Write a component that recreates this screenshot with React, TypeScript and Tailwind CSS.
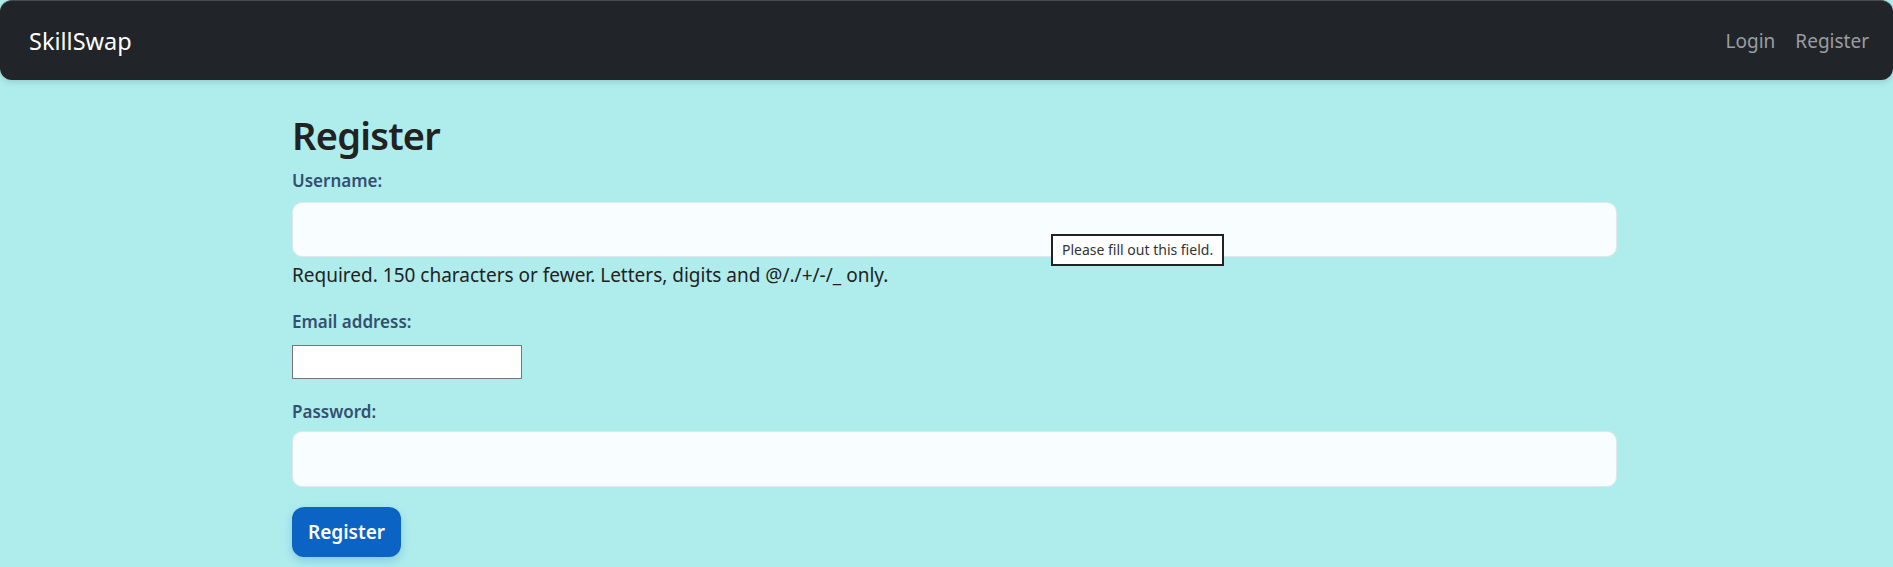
export default function App() {
  return (
    <div className="min-h-[567px] bg-[#afeded] font-['Noto_Sans',sans-serif]">
      <nav className="flex h-[80px] items-center justify-between rounded-[12px] border-t border-[#4a4d50] bg-[#212529] pl-[29px] pr-[24px] shadow-[0_2px_6px_rgba(0,0,0,0.15)]">
        <a href="#" className="pt-[2px] text-[23.5px] text-white">
          SkillSwap
        </a>
        <div className="flex items-center gap-[20px] pt-[2px] text-[19px] text-[#9a9da1]">
          <a href="#">Login</a>
          <a href="#">Register</a>
        </div>
      </nav>

      <main className="pl-[292px] pr-[276px]">
        <h1 className="pt-[31px] text-[38px] font-semibold leading-[48px] tracking-[-0.02em] text-[#222]">Register</h1>
        <form className="relative">
          <label className="mt-[9px] block text-[17px] font-semibold text-[#34506f]">Username:</label>
          <input className="mt-[8px] block h-[55px] w-full rounded-[10px] border border-[#dde7ec] bg-[#f8fdff]" />
          <p className="mt-[4px] text-[19px] text-[#222]">
            Required. 150 characters or fewer. Letters, digits and @/./+/-/_ only.
          </p>
          <div className="absolute left-[759px] top-[66px] border-2 border-[#222] bg-white px-[9px] py-[4px] text-[14px] leading-[20px] text-[#333]">
            Please fill out this field.
          </div>

          <label className="mt-[20px] block text-[17px] font-semibold text-[#34506f]">Email address:</label>
          <input type="email" className="mt-[10px] block h-[34px] w-[230px] border border-[#767676] bg-white" />

          <label className="mt-[20px] block text-[17px] font-semibold text-[#34506f]">Password:</label>
          <input type="password" className="mt-[7px] block h-[56px] w-full rounded-[10px] border border-[#dde7ec] bg-[#f8fdff]" />

          <button
            type="button"
            className="mt-[20px] h-[50px] rounded-[12px] bg-[#0b63c4] px-[16px] text-[19px] font-semibold text-white shadow-[0_4px_10px_rgba(11,99,196,0.25)]"
          >
            Register
          </button>
        </form>
      </main>
    </div>
  );
}
